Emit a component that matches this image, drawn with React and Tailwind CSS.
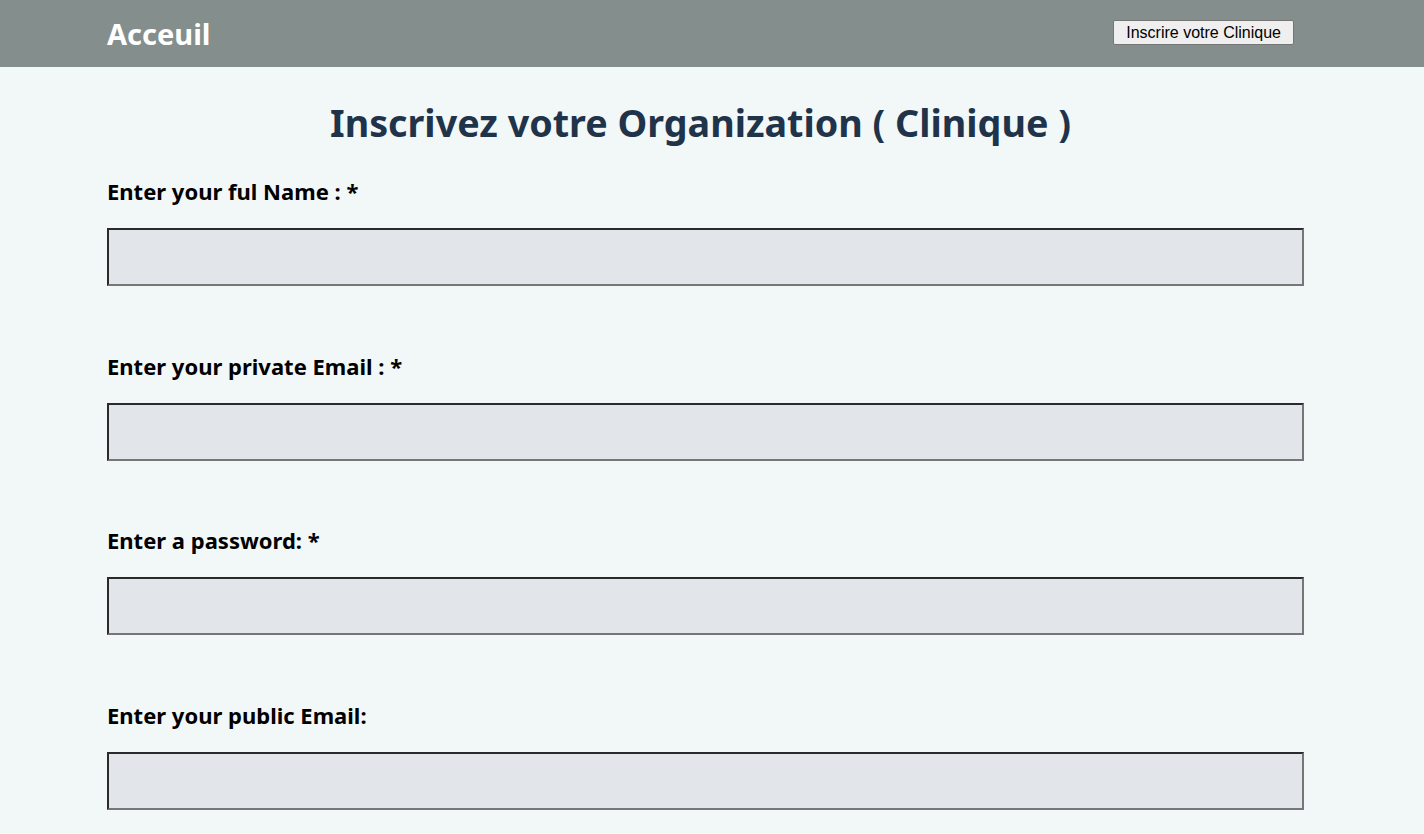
const fields = [
  { label: "Enter your ful Name : *", type: "text" },
  { label: "Enter your private Email : *", type: "email" },
  { label: "Enter a password: *", type: "password" },
  { label: "Enter your public Email:", type: "email" },
];

export default function App() {
  return (
    <div className="min-h-screen bg-[#f2f7f7] font-['Noto_Sans',sans-serif]">
      <header className="h-[67px] bg-[#838e8d] flex items-center justify-between pl-[107px] pr-[130px]">
        <a className="text-[29px] font-bold text-white leading-none -mt-[1px]">Acceuil</a>
        <button className="h-[25px] px-[12px] -mt-[2px] bg-[#efefef] border border-[#767676] rounded-[2px] text-[16px] text-black font-['Liberation_Sans',sans-serif]">
          Inscrire votre Clinique
        </button>
      </header>

      <main className="pl-[107px] pr-[120px] pt-[32px]">
        <h1 className="text-center text-[37.7px] font-bold text-[#1f334a] leading-[48px] mb-[30px] pr-[10px]">
          Inscrivez votre Organization ( Clinique )
        </h1>

        <form className="flex flex-col">
          {fields.map((f, i) => (
            <div key={i} className="flex flex-col">
              <label className="text-[22px] font-bold text-black leading-[28px] mb-[23px]">
                {f.label}
              </label>
              <input
                type={f.type}
                className="h-[58px] w-full bg-[#e2e6ea] border-2 border-t-[#2a2a2a] border-l-[#2a2a2a] border-b-[#767676] border-r-[#767676] mb-[65.5px]"
              />
            </div>
          ))}
        </form>
      </main>
    </div>
  );
}
